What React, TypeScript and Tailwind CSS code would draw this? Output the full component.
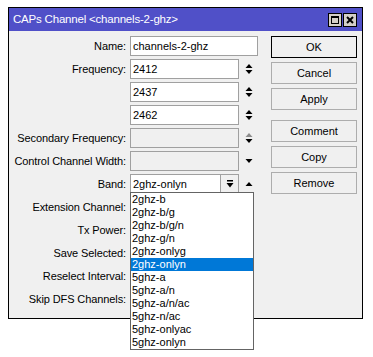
import React from 'react';

const font = { fontFamily: '"Liberation Sans", Arial, sans-serif' };

const bands = [
  '2ghz-b',
  '2ghz-b/g',
  '2ghz-b/g/n',
  '2ghz-g/n',
  '2ghz-onlyg',
  '2ghz-onlyn',
  '5ghz-a',
  '5ghz-a/n',
  '5ghz-a/n/ac',
  '5ghz-n/ac',
  '5ghz-onlyac',
  '5ghz-onlyn',
];

const UpDown: React.FC<{ dimUp?: boolean }> = ({ dimUp }) => (
  <svg width="8" height="12" viewBox="0 0 8 12">
    <path d="M4 1 L7.5 5 L0.5 5 Z" fill={dimUp ? '#8c8c8c' : '#000'} />
    <path d="M0.5 7 L7.5 7 L4 11 Z" fill="#000" />
  </svg>
);

const Down = () => (
  <svg width="8" height="12" viewBox="0 0 8 12">
    <path d="M0.5 4 L7.5 4 L4 8 Z" fill="#000" />
  </svg>
);

const Up = () => (
  <svg width="8" height="12" viewBox="0 0 8 12">
    <path d="M4 4 L7.5 8 L0.5 8 Z" fill="#000" />
  </svg>
);

const Label: React.FC<{ text?: string }> = ({ text }) => (
  <div className="w-[119px] pr-[2px] text-right whitespace-nowrap tracking-[-0.1px]">{text}</div>
);

const Field: React.FC<{ value?: string; disabled?: boolean; wide?: boolean }> = ({ value, disabled, wide }) => (
  <div
    className={`h-[20px] border border-[#a0a0a0] px-[2px] leading-[18px] ${
      wide ? 'w-[128px]' : 'w-[109px]'
    } ${disabled ? 'bg-[#f0f0f0]' : 'bg-white'}`}
  >
    {value}
  </div>
);

const Row: React.FC<{ children: React.ReactNode }> = ({ children }) => (
  <div className="flex items-center h-[20px] gap-[2px]">{children}</div>
);

const Btn: React.FC<{ text: string; main?: boolean }> = ({ text, main }) => (
  <div
    className={`h-[22px] w-[86px] flex items-center justify-center bg-[#f0f0f0] ${
      main ? 'border border-black' : 'border border-[#adadad]'
    }`}
  >
    {text}
  </div>
);

export default function App() {
  return (
    <div className="relative w-[373px] h-[357px] bg-white text-[11px] text-black" style={font}>
      <div className="absolute left-[8px] top-[7px] w-[355px] h-[312px] border border-black bg-[#f0f0f0] flex flex-col">
        <div className="h-[23px] bg-[#5050c8] flex items-center justify-between pl-[4px] pr-[5px]">
          <span className="text-white text-[11.5px] tracking-[-0.2px]">CAPs Channel &lt;channels-2-ghz&gt;</span>
          <div className="flex gap-[1px]">
            <div className="w-[14px] h-[14px] bg-[#d4d0c8] border border-black flex items-center justify-center">
              <div className="w-[8px] h-[8px] border border-black border-t-2" />
            </div>
            <div className="w-[14px] h-[14px] bg-[#d4d0c8] border border-black flex items-center justify-center">
              <svg width="8" height="8" viewBox="0 0 8 8">
                <path d="M1 1 L7 7 M7 1 L1 7" stroke="#000" strokeWidth="2" />
              </svg>
            </div>
          </div>
        </div>
        <div className="flex pt-[5px]">
          <div className="flex flex-col gap-[3px]">
            <Row>
              <Label text="Name:" />
              <Field value="channels-2-ghz" wide />
            </Row>
            <Row>
              <Label text="Frequency:" />
              <Field value="2412" />
              <div className="ml-[4px]"><UpDown /></div>
            </Row>
            <Row>
              <Label />
              <Field value="2437" />
              <div className="ml-[4px]"><UpDown /></div>
            </Row>
            <Row>
              <Label />
              <Field value="2462" />
              <div className="ml-[4px]"><UpDown /></div>
            </Row>
            <Row>
              <Label text="Secondary Frequency:" />
              <Field disabled />
              <div className="ml-[4px]"><UpDown dimUp /></div>
            </Row>
            <Row>
              <Label text="Control Channel Width:" />
              <Field disabled />
              <div className="ml-[4px]"><Down /></div>
            </Row>
            <Row>
              <Label text="Band:" />
              <div className="flex h-[20px] w-[109px] border border-[#a0a0a0] bg-white">
                <div className="flex-1 px-[2px] leading-[18px]">2ghz-onlyn</div>
                <div className="w-[18px] border-l border-[#a0a0a0] bg-[#f0f0f0] flex items-center justify-center">
                  <svg width="8" height="10" viewBox="0 0 8 10">
                    <rect x="1" y="1" width="6" height="1.5" fill="#000" />
                    <path d="M0.5 4 L7.5 4 L4 8.5 Z" fill="#000" />
                  </svg>
                </div>
              </div>
              <div className="ml-[4px]"><Up /></div>
            </Row>
            <Row><Label text="Extension Channel:" /></Row>
            <Row><Label text="Tx Power:" /></Row>
            <Row><Label text="Save Selected:" /></Row>
            <Row><Label text="Reselect Interval:" /></Row>
            <Row><Label text="Skip DFS Channels:" /></Row>
          </div>
          <div className="ml-auto mr-[5px] flex flex-col gap-[4px]">
            <Btn text="OK" main />
            <Btn text="Cancel" />
            <Btn text="Apply" />
            <div className="h-[2px]" />
            <Btn text="Comment" />
            <Btn text="Copy" />
            <Btn text="Remove" />
          </div>
        </div>
      </div>
      <div className="absolute left-[130px] top-[192px] w-[124px] border border-[#646464] bg-white">
        {bands.map((b) => (
          <div
            key={b}
            className={`h-[13px] leading-[13px] pl-[1px] ${
              b === '2ghz-onlyn' ? 'bg-[#0078d7] text-white' : ''
            }`}
          >
            {b}
          </div>
        ))}
      </div>
    </div>
  );
}
